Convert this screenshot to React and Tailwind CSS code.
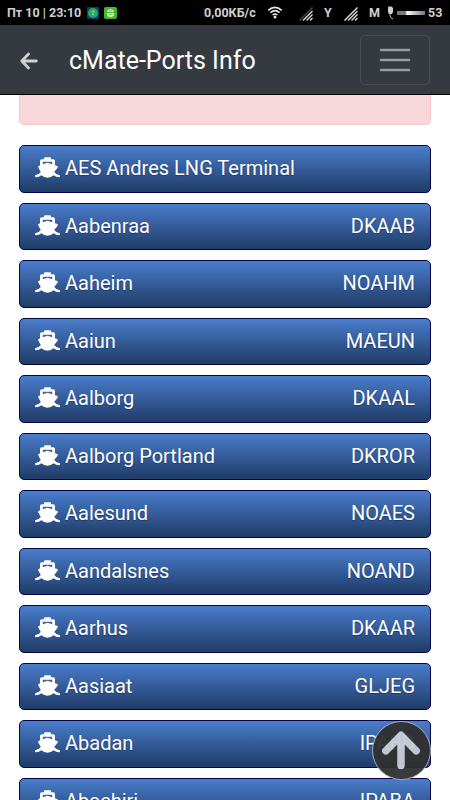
import React from "react";

const ports = [
  ["AES Andres LNG Terminal", ""],
  ["Aabenraa", "DKAAB"],
  ["Aaheim", "NOAHM"],
  ["Aaiun", "MAEUN"],
  ["Aalborg", "DKAAL"],
  ["Aalborg Portland", "DKROR"],
  ["Aalesund", "NOAES"],
  ["Aandalsnes", "NOAND"],
  ["Aarhus", "DKAAR"],
  ["Aasiaat", "GLJEG"],
  ["Abadan", "IPABD"],
  ["Abachiri", "IPABA"],
];

function Ship() {
  return (
    <svg className="mb-px" width="25" height="21" viewBox="0 0 25 21" fill="white">
      <path
        fillRule="evenodd"
        d="M9 1.2Q9 .3 10 .3h5q1 0 1 .9v1.1h2.3q1.7 0 1.7 1.6v4.4l2.2.8q1.2.6.4 1.7L19.2 15q1.8 2.7 5.1 2.9.6 0 .6.7v1q0 .7-.7.7-3.2-.1-5.6-2-2.6 2.4-6.1 2.4t-6.1-2.4q-2.4 1.9-5.6 2-.7 0-.7-.7v-1q0-.7.6-.7 3.3-.2 5.1-2.9l-2.4-4.2q-.8-1.1.4-1.7L5 8.300V3.900q0-1.600 1.700-1.600H9zM7.800 4.800v2.500l4.700-1.500 4.700 1.500V4.800z"
      />
    </svg>
  );
}

function Signal({ weak, className }) {
  return (
    <svg className={className} width="14" height="14" viewBox="0 0 14 14" fill="none" stroke="#dcdcdc" strokeWidth="1.4">
      <path d="M.5 13.5 13.5.5" stroke={weak ? "#484848" : "#dcdcdc"} />
      <path d="M4 13.5 13.5 4" />
      <path d="M7.5 13.5l6-6M11 13.5l2.5-2.5" />
    </svg>
  );
}

function StatusBar() {
  return (
    <div className="flex h-[25px] shrink-0 items-center bg-black pl-[7px] text-[12.5px] font-bold leading-[25px] text-[#cfcfcf]">
      <span className="w-[80px] whitespace-nowrap">Пт 10 | 23:10</span>
      <svg width="12" height="12" viewBox="0 0 12 12">
        <rect width="12" height="12" rx="1" fill="#123879" />
        <circle cx="6" cy="6" r="5.1" fill="#29a85b" />
        <path d="M4.8 5c.2-1.3 2.5-1.300 2.500 0S5.300 6 5.300 7s1.200 1.100 1.900.4" fill="none" stroke="#b4e3c3" strokeWidth=".8" />
      </svg>
      <svg className="ml-[5px]" width="13" height="12" viewBox="0 0 13 12">
        <rect width="13" height="12" rx="2" fill="#49b72c" />
        <path d="M3 6h7v1a3.500 3 0 0 1-7 0zM3.200 5a3.300 2.800 0 0 1 6.600 0z" fill="#d9f5cb" />
        <path d="M4.500 7.400h4M5 3.900h3" stroke="#49b72c" strokeWidth=".8" />
      </svg>
      <span className="ml-[87px] w-[63px] whitespace-nowrap">0,00КБ/с</span>
      <svg className="mb-px" width="16" height="13" viewBox="0 0 16 13" fill="none" stroke="#e5e5e5" strokeWidth="1.6">
        <path d="M1.200 4.300Q8-1.700 14.800 4.300M3.400 6.700Q8 2.700 12.600 6.700M5.600 9Q8 7 10.400 9" />
        <circle cx="8" cy="11" r="1.500" fill="#e5e5e5" stroke="none" />
      </svg>
      <Signal weak className="ml-[16px] mt-[2px]" />
      <span className="ml-[11px] w-[20px]">Y</span>
      <Signal className="mt-[2px]" />
      <span className="ml-[11px] w-[18px]">M</span>
      <svg width="7" height="14" viewBox="0 0 7 14">
        <path d="M1.500.5h3L6 2v4L5 8H2L1 6V2z" fill="#cfcfcf" />
        <path d="M3 7v2.500Q3 12 6 13" fill="none" stroke="#bdbdbd" />
      </svg>
      <span className="ml-[3px] h-[4px] w-[28px] bg-linear-to-r from-[#777] from-30% via-white via-35% to-[#777]" />
      <span className="ml-[3px]">53</span>
    </div>
  );
}

function Header() {
  return (
    <header className="flex h-[70px] shrink-0 items-center border-b border-black bg-[#343a40] pl-[20px] pr-[20px]">
      <svg className="mt-[3px]" width="18" height="18" viewBox="0 0 18 18" fill="none" stroke="#d0d0d0" strokeWidth="2.8" strokeLinecap="round" strokeLinejoin="round">
        <path d="M16.300 9H2M8.500 2 1.800 9l6.700 7" />
      </svg>
      <h1 className="ml-[31px] grow pt-[2px] text-[25px] leading-[30px] text-white">cMate-Ports Info</h1>
      <button className="flex h-[50px] w-[70px] items-center justify-center rounded-[5px] border border-[#494e50]" aria-label="Menu">
        <svg width="32" height="26" viewBox="0 0 32 26" stroke="#9a9da0" strokeWidth="2.500" strokeLinecap="round">
          <path d="M2 3h28M2 13h28M2 23h28" />
        </svg>
      </button>
    </header>
  );
}

export default function App() {
  return (
    <div className="relative flex h-[800px] w-[450px] flex-col overflow-hidden bg-white font-[Roboto,sans-serif]">
      <StatusBar />
      <Header />
      <main className="min-h-0 grow overflow-hidden px-[19px]">
        <div className="h-[30px] rounded-b-[5px] border border-t-0 border-[#f5c6cb] bg-[#f8d7da]" />
        <div className="mt-[20px] flex flex-col gap-[10px]">
          {ports.map(([name, code]) => (
            <div
              key={name}
              className="flex h-[47.5px] shrink-0 items-center justify-between rounded-[5px] border border-[#020447] bg-linear-to-b from-[#4a7dcc] to-[#203c68] pb-px pl-[15px] pr-[15px] text-[20px] leading-[30px] text-white [text-shadow:0_1px_1px_#203c68]"
            >
              <span className="flex items-center gap-[5px]">
                <Ship />
                {name}
              </span>
              <span>{code}</span>
            </div>
          ))}
        </div>
      </main>
      <button className="absolute left-[371.5px] top-[720.5px] flex size-[59px] items-center justify-center rounded-full border border-[#aeb4bf] bg-[#303030] opacity-95" aria-label="Back to top">
        <svg width="38" height="38" viewBox="0 0 38 38" fill="none" stroke="#c9ced6" strokeWidth="7.500" strokeLinecap="round" strokeLinejoin="round">
          <path d="M19 34.500V5M3.800 19.800 19 4.300l15.200 15.500" />
        </svg>
      </button>
    </div>
  );
}
